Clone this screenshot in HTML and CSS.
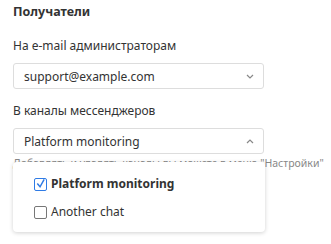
FILE: index.html
```html
<!DOCTYPE html>
<html lang="ru">
<head>
  <meta charset="UTF-8">
  <title>Получатели</title>
  <link rel="stylesheet" href="styles.css">
</head>
<body>

  <div class="panel">
    <h3 class="title">Получатели</h3>

    <div class="field">
      <label class="label">На e-mail администраторам</label>
      <div class="select">
        <span>support@example.com</span>
        <svg class="chev" width="8" height="5" viewBox="0 0 8 5"><path d="M1 1l3 3 3-3" fill="none" stroke="#888" stroke-width="1.2"/></svg>
      </div>
    </div>

    <div class="field">
      <label class="label">В каналы мессенджеров</label>
      <div class="select-wrap">
        <div class="select">
          <span>Platform monitoring</span>
          <svg class="chev" width="8" height="5" viewBox="0 0 8 5"><path d="M1 4l3-3 3 3" fill="none" stroke="#888" stroke-width="1.2"/></svg>
        </div>
        <p class="hint">Добавлять и удалять каналы вы можете в меню "Настройки"</p>

        <div class="menu">
          <label class="option checked">
            <span class="box">
              <svg width="12" height="12" viewBox="0 0 12 12"><path d="M2.5 5.5l3 3.5 4.5-8" fill="none" stroke="#2f7be5" stroke-width="1.6"/></svg>
            </span>
            Platform monitoring
          </label>
          <label class="option">
            <span class="box"></span>
            Another chat
          </label>
        </div>
      </div>
    </div>
  </div>

</body>
</html>
```

FILE: styles.css
```css
body {
  margin: 0;
  font-family: "Noto Sans", Arial, sans-serif;
  background: #fff;
  color: #333;
  width: 331px;
  height: 244px;
  overflow: hidden;
}

.panel {
  padding: 3px 13px 0 13px;
  width: 251px;
}

.title {
  margin: 0;
  font-size: 12.5px;
  font-weight: bold;
  line-height: 18px;
  color: #333;
}

.field {
  margin-top: 16px;
}

.field + .field {
  margin-top: 13px;
}

.label {
  display: block;
  font-size: 12px;
  line-height: 18px;
  margin-bottom: 8px;
}

.select-wrap {
  position: relative;
}

.select {
  display: flex;
  align-items: center;
  justify-content: space-between;
  height: 24px;
  padding: 0 9px 0 10px;
  border: 1px solid #ddd;
  border-radius: 3px;
  font-size: 12px;
  color: #333;
}

.chev {
  display: block;
}

.hint {
  margin: 2px 0 0 0;
  font-size: 10.5px;
  color: #888;
  white-space: nowrap;
}

.menu {
  position: absolute;
  left: 0;
  top: 34px;
  width: 252px;
  box-sizing: border-box;
  padding: 13px 21px 11px 21px;
  background: #fff;
  border-radius: 4px;
  box-shadow: 0 1px 4px rgba(0, 0, 0, 0.18);
}

.option {
  display: flex;
  align-items: center;
  gap: 4px;
  font-size: 12px;
  line-height: 18px;
  height: 18px;
}

.option + .option {
  margin-top: 10px;
}

.option.checked {
  font-weight: bold;
}

.box {
  display: flex;
  align-items: center;
  justify-content: center;
  width: 11px;
  height: 11px;
  border: 1px solid #777;
  border-radius: 2px;
}

.checked .box {
  border-color: #2f7be5;
}
```
